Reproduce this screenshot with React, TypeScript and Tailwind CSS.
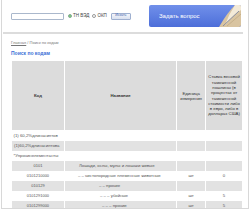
import React from "react";

const rows = [
  { code: "0101", name: "Лошади, ослы, мулы и лошаки живые", pad: "pl-[14px]", unit: "", rate: "", gray: true },
  { code: "0101210000", name: "– – чистопородные племенные животные", pad: "pl-[13px]", unit: "шт", rate: "0", gray: false },
  { code: "010129", name: "– – прочие", pad: "pl-[34px]", unit: "", rate: "", gray: true },
  { code: "0101291000", name: "– – – убойные", pad: "pl-[35px]", unit: "шт", rate: "5", gray: false },
  { code: "0101299000", name: "– – – прочие", pad: "pl-[37px]", unit: "шт", rate: "5", gray: true },
];

export default function App() {
  return (
    <div className="w-[252px] h-[210px] bg-white overflow-hidden font-['Liberation_Sans',Arial,sans-serif]">
      <div className="ml-[1px] w-[248px] h-[209px] border-x border-b border-[#d8d8d8] overflow-hidden">
        {/* header */}
        <div className="flex items-center h-[32px] pl-[9px] pr-[7px]">
          <div className="w-[53px] h-[7px] border border-[#aab8cc] rounded-[1px] bg-white" />
          <div className="flex items-center ml-[4px] gap-[1px]">
            <span className="w-[4px] h-[4px] rounded-full border border-[#8a9] bg-[#7c7] inline-block" />
            <span className="text-[4.5px] text-[#444]">ТН ВЭД</span>
          </div>
          <div className="flex items-center ml-[3px] gap-[1px]">
            <span className="w-[4px] h-[4px] rounded-full border border-[#999] bg-white inline-block" />
            <span className="text-[4.5px] text-[#444]">ОКП</span>
          </div>
          <div className="ml-[4px] w-[20px] h-[7px] border border-[#9fb0d0] rounded-[1px] bg-gradient-to-b from-[#f4f6fb] to-[#d9e0ef] flex items-center justify-center">
            <span className="text-[3.5px] text-[#3a5aa8]">Искать</span>
          </div>
          <div className="ml-auto w-[92px] h-[22px] rounded-[2px] bg-gradient-to-b from-[#7190ea] to-[#4d6ed9] flex items-center relative overflow-hidden">
            <span className="ml-[10px] text-[6px] text-white">Задать вопрос</span>
            <svg className="absolute right-0 top-0" width="28" height="22" viewBox="0 0 28 22">
              <path d="M6 22 L28 22 L28 0 L22 0 Q14 8 6 22 Z" fill="#d9c4a0" />
              <path d="M22 0 L28 0 L28 5 Q20 10 12 20 Q16 9 22 0 Z" fill="#f3ead8" />
              <path d="M10 21 L26 6" stroke="#8a8fa0" strokeWidth="1" />
              <path d="M14 21 L28 9" stroke="#b9a27c" strokeWidth="0.6" />
            </svg>
          </div>
        </div>
        <div className="h-[2px] bg-[#dcdcdc] ml-[1px] mr-[5px]" />
        {/* breadcrumb */}
        <div className="pl-[9px] mt-[6px] text-[4px] text-[#777] leading-[5px]">
          <span className="underline">Главная</span> / Поиск по кодам
        </div>
        <div className="pl-[9px] mt-[5px] text-[5px] font-bold text-[#3b6fd6] leading-[6px]">Поиск по кодам</div>
        {/* table */}
        <table className="ml-[9px] mt-[4px] w-[232px] border-collapse text-[4.3px] text-[#555] leading-[5px]">
          <colgroup>
            <col className="w-[53px]" />
            <col className="w-[113px]" />
            <col className="w-[29px]" />
            <col className="w-[37px]" />
          </colgroup>
          <thead>
            <tr className="h-[70px] bg-[#dcdcdc] text-[#333]">
              <th className="border border-white align-middle font-bold">Код</th>
              <th className="border border-white align-middle font-bold">Название</th>
              <th className="border border-white align-middle font-normal px-[1px]">Единица измерения</th>
              <th className="border border-white align-middle font-normal px-[1px] leading-[5.3px]">
                Ставка весовой таможенной пошлины (в процентах от таможенной стоимости либо в евро, либо в долларах США)
              </th>
            </tr>
          </thead>
          <tbody>
            <tr className="h-[10px]">
              <td colSpan={4} className="pl-[2px] text-left">(1) 60,2%длинасиптов</td>
            </tr>
            <tr className="h-[10px] bg-[#e2e2e2]">
              <td className="border-x border-white pl-[2px]">(1)60,2%длинасиптова</td>
              <td className="border-x border-white" />
              <td className="border-x border-white" />
              <td className="border-x border-white" />
            </tr>
            <tr className="h-[10px]">
              <td colSpan={4} className="pl-[2px] text-left">*Упрочинелементанты</td>
            </tr>
            {rows.map((r) => (
              <tr key={r.code} className={`h-[10px] ${r.gray ? "bg-[#e2e2e2]" : ""}`}>
                <td className="border-x border-white text-center text-[4px]">{r.code}</td>
                <td className={`border-x border-white text-left ${r.pad}`}>{r.name}</td>
                <td className="border-x border-white text-center">{r.unit}</td>
                <td className="border-x border-white text-center">{r.rate}</td>
              </tr>
            ))}
          </tbody>
        </table>
      </div>
    </div>
  );
}
